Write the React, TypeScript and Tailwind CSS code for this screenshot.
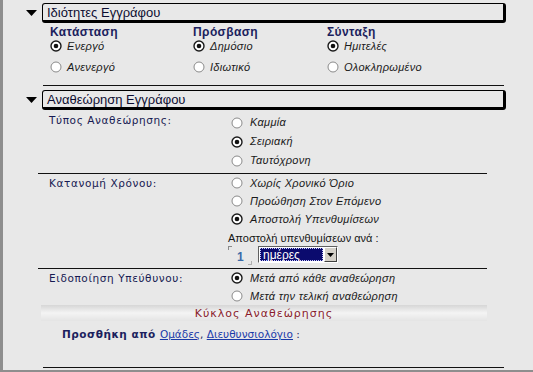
import React from "react";

const Radio = ({ checked }: { checked?: boolean }) => (
  <svg width="12" height="12" viewBox="0 0 12 12" className="shrink-0">
    <circle cx="6" cy="6" r="5" fill="#ffffff" stroke={checked ? "#1a1a1a" : "#8a8a8a"} strokeWidth={checked ? 1.4 : 1} />
    {checked && <circle cx="6" cy="6" r="2.3" fill="#111111" />}
  </svg>
);

const RadioRow = ({ checked, label, h, gap = "gap-[5px]" }: { checked?: boolean; label: string; h: string; gap?: string }) => (
  <div className={`flex items-center ${gap} ${h}`}>
    <Radio checked={checked} />
    <span className="italic text-[11px] tracking-[0.3px] text-[#1a1a1a] leading-none" style={{ fontFamily: '"Liberation Sans", Arial, sans-serif' }}>
      {label}
    </span>
  </div>
);

const SectionHeader = ({ title }: { title: string }) => (
  <div className="flex items-center h-[20px]">
    <div className="w-[39px] flex justify-end pr-[5px]">
      <svg width="11" height="6" viewBox="0 0 11 6">
        <polygon points="0,0 11,0 5.5,6" fill="#000" />
      </svg>
    </div>
    <div className="w-[464px] h-[20px] border-l border-t border-r-[3px] border-b-[3px] border-black rounded-[3px] flex items-center pl-[4px] text-[13px] text-[#0c0c30] leading-none" style={{ fontFamily: '"Liberation Sans", Arial, sans-serif' }}>
      {title}
    </div>
  </div>
);

const Heading = ({ children }: { children: React.ReactNode }) => (
  <div className="h-[14px] flex items-center text-[12px] font-bold tracking-[0.4px] text-[#1c1f5e] leading-none" style={{ fontFamily: '"Liberation Sans", Arial, sans-serif' }}>
    {children}
  </div>
);

const Label = ({ children, extra = "" }: { children: React.ReactNode; extra?: string }) => (
  <div className={`w-[182px] shrink-0 tracking-[0.6px] text-[#171a52] leading-[18px] ${extra}`} style={{ fontFamily: '"DejaVu Sans", Verdana, sans-serif', fontSize: "10.5px" }}>
    {children}
  </div>
);

export default function App() {
  return (
    <div className="w-[533px] h-[372px] bg-[#e8e8e8] border-l-[3px] border-b-2 border-[#8e8e8e] overflow-hidden" style={{ fontFamily: '"Liberation Sans", Arial, sans-serif' }}>
      <div className="pt-[3px]">
        <SectionHeader title="Ιδιότητες Εγγράφου" />
      </div>

      {/* Section 1 */}
      <div className="pl-[47px] mt-[2px] grid grid-cols-[143px_134px_1fr]">
        <div className="flex flex-col">
          <Heading>Κατάσταση</Heading>
          <RadioRow checked label="Ενεργό" h="h-[14px]" gap="gap-[5px]" />
          <div className="mt-[7px]">
            <RadioRow label="Ανενεργό" h="h-[14px]" gap="gap-[5px]" />
          </div>
        </div>
        <div className="flex flex-col">
          <Heading>Πρόσβαση</Heading>
          <RadioRow checked label="Δημόσιο" h="h-[14px]" gap="gap-[5px]" />
          <div className="mt-[7px]">
            <RadioRow label="Ιδιωτικό" h="h-[14px]" gap="gap-[5px]" />
          </div>
        </div>
        <div className="flex flex-col">
          <Heading>Σύνταξη</Heading>
          <RadioRow checked label="Ημιτελές" h="h-[14px]" gap="gap-[5px]" />
          <div className="mt-[7px]">
            <RadioRow label="Ολοκληρωμένο" h="h-[14px]" gap="gap-[5px]" />
          </div>
        </div>
      </div>

      <div className="ml-[40px] mt-[11px] w-[461px] h-px bg-[#111]" />

      <div className="mt-[4px]">
        <SectionHeader title="Αναθεώρηση Εγγράφου" />
      </div>

      {/* Block A */}
      <div className="flex pl-[46px] mt-[3px]">
        <Label extra="-mt-[2px]">Τύπος Αναθεώρησης:</Label>
        <div className="flex flex-col">
          <RadioRow label="Καμμία" h="h-[19px]" gap="gap-[7px]" />
          <RadioRow checked label="Σειριακή" h="h-[19px]" gap="gap-[7px]" />
          <RadioRow label="Ταυτόχρονη" h="h-[19px]" gap="gap-[7px]" />
        </div>
      </div>

      <div className="ml-[35px] mt-[3px] w-[449px] h-px bg-[#111]" />

      {/* Block B */}
      <div className="flex pl-[46px]">
        <Label>Κατανομή Χρόνου:</Label>
        <div className="flex flex-col">
          <RadioRow label="Χωρίς Χρονικό Όριο" h="h-[18px]" gap="gap-[7px]" />
          <RadioRow label="Προώθηση Στον Επόμενο" h="h-[18px]" gap="gap-[7px]" />
          <RadioRow checked label="Αποστολή Υπενθυμίσεων" h="h-[18px]" gap="gap-[7px]" />
          <div className="-ml-[3px] mt-[2px] h-[16px] flex items-center text-[11px] text-[#151515] leading-none">
            Αποστολή υπενθυμίσεων ανά :
          </div>
          <div className="-ml-[3px] h-[17px] flex items-center gap-[6px]">
            <div className="relative w-[24px] h-[19px] mt-[2px]">
              <span className="absolute left-0 top-0 w-[4px] h-[4px] border-l border-t border-[#8a8a8a]" />
              <span className="absolute right-0 bottom-0 w-[4px] h-[4px] border-r border-b border-[#b0b0b0]" />
              <span className="absolute left-[9px] top-[5px] text-[12px] font-bold text-[#3a6aa8] leading-none">1</span>
            </div>
            <div className="w-[80px] h-[17px] border-t border-l border-[#606060] border-b border-r border-b-white border-r-white bg-white flex">
              <div className="flex-1 m-[1px] bg-[#0b0b6e] border border-dotted border-[#c8c8ff] flex items-center pl-[2px] text-[12px] text-white leading-none">
                ημέρες
              </div>
              <div className="w-[13px] bg-[#d4d0c8] border-t border-l border-white border-b border-r border-b-[#404040] border-r-[#404040] flex items-center justify-center">
                <svg width="7" height="4" viewBox="0 0 7 4">
                  <polygon points="0,0 7,0 3.5,4" fill="#000" />
                </svg>
              </div>
            </div>
          </div>
        </div>
      </div>

      <div className="ml-[35px] mt-[5px] w-[449px] h-px bg-[#111]" />

      {/* Block C */}
      <div className="flex pl-[46px]">
        <Label>Ειδοποίηση Υπεύθυνου:</Label>
        <div className="flex flex-col">
          <RadioRow checked label="Μετά από κάθε αναθεώρηση" h="h-[18px]" gap="gap-[7px]" />
          <RadioRow label="Μετά την τελική αναθεώρηση" h="h-[18px]" gap="gap-[7px]" />
        </div>
      </div>

      <div className="ml-[38px] w-[446px] h-[16px] bg-gradient-to-b from-[#d6d6d6] via-[#f4f4f4] to-[#e4e4e4] flex items-center justify-center tracking-[1px] text-[#8a1c2c] leading-none" style={{ fontFamily: '"DejaVu Sans", Verdana, sans-serif', fontSize: "11px" }}>
        Κύκλος Αναθεώρησης
      </div>

      <div className="ml-[59px] mt-[6px] h-[14px] flex items-center leading-none" style={{ fontFamily: '"DejaVu Sans", Verdana, sans-serif', fontSize: "10.5px" }}>
        <span className="font-bold tracking-[0.5px] text-[#1c1f5e]">Προσθήκη από&nbsp;</span>
        <span className="underline text-[#1a3aa8]">Ομάδες</span>
        <span className="text-[#1c1f5e]">,&nbsp;</span>
        <span className="underline text-[#1a3aa8]">Διευθυνσιολόγιο</span>
        <span className="text-[#1c1f5e]">&nbsp;:</span>
      </div>

      <div className="ml-[40px] mt-[26px] w-[461px] h-px bg-[#111]" />
    </div>
  );
}
